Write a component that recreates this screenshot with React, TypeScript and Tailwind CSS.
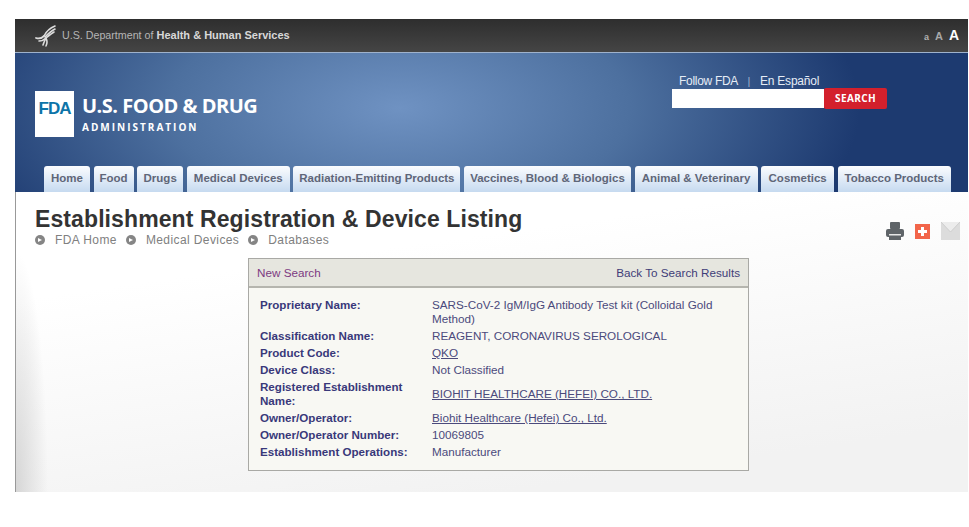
const tabs = [
  { label: "Home", width: "w-[46px]" },
  { label: "Food", width: "w-[40px]" },
  { label: "Drugs", width: "w-[46px]" },
  { label: "Medical Devices", width: "w-[103px]" },
  { label: "Radiation-Emitting Products", width: "w-[167px]" },
  { label: "Vaccines, Blood & Biologics", width: "w-[167px]" },
  { label: "Animal & Veterinary", width: "w-[123px]" },
  { label: "Cosmetics", width: "w-[73px]" },
  { label: "Tobacco Products", width: "w-[113px]" },
];

const crumbs = ["FDA Home", "Medical Devices", "Databases"];

const rows = [
  { label: "Proprietary Name:", value: "SARS-CoV-2 IgM/IgG Antibody Test kit (Colloidal Gold Method)" },
  { label: "Classification Name:", value: "REAGENT, CORONAVIRUS SEROLOGICAL" },
  { label: "Product Code:", value: "QKO", link: true },
  { label: "Device Class:", value: "Not Classified" },
  { label: "Registered Establishment Name:", value: "BIOHIT HEALTHCARE (HEFEI) CO., LTD.", link: true },
  { label: "Owner/Operator:", value: "Biohit Healthcare (Hefei) Co., Ltd.", link: true },
  { label: "Owner/Operator Number:", value: "10069805" },
  { label: "Establishment Operations:", value: "Manufacturer" },
];

function Eagle() {
  return (
    <svg width="22" height="22" viewBox="0 0 22 22" fill="none" stroke="#dcdcdc" strokeLinecap="round">
      <path d="M20 1 C15 3 11 7 9 11" strokeWidth="1.6" />
      <path d="M20 4 C16 6 13 9 10 12" strokeWidth="1.6" />
      <path d="M19 7 C16 9 13 11 11 13" strokeWidth="1.6" />
      <path d="M1 13 C4 14 7 13 9 11" strokeWidth="1.8" />
      <path d="M4 16 C7 16 9 15 11 13" strokeWidth="1.6" />
      <path d="M8 20 C9 17 10 15 11 13 C12 15 13 17 11 21" strokeWidth="1.6" />
    </svg>
  );
}

function Printer() {
  return (
    <svg width="18" height="18" viewBox="0 0 18 18" fill="#5f6468">
      <rect x="4" y="0" width="10" height="7" rx="1" />
      <rect x="0" y="7" width="18" height="8" rx="2" />
      <rect x="3" y="12" width="12" height="1.5" fill="#e6e6e6" />
      <rect x="3" y="15" width="12" height="3" />
    </svg>
  );
}

function AddThis() {
  return (
    <svg width="15" height="15" viewBox="0 0 15 15">
      <rect width="15" height="15" fill="#f2654a" />
      <path d="M6 3h3v3h3v3H9v3H6V9H3V6h3z" fill="#fff" />
    </svg>
  );
}

function Mail() {
  return (
    <svg width="19" height="18" viewBox="0 0 19 18">
      <rect width="19" height="18" fill="#dcdcdc" />
      <path d="M0 0l9.5 10L19 0" fill="#ececec" stroke="#c4c4c4" strokeWidth="0.7" />
    </svg>
  );
}

function Bullet() {
  return (
    <span className="flex h-[10px] w-[10px] items-center justify-center rounded-full bg-[#858585]">
      <span className="h-0 w-0 border-y-[2.5px] border-l-[4px] border-y-transparent border-l-white" />
    </span>
  );
}

export default function App() {
  return (
    <div className="min-h-[527px] bg-white pt-[19px] pl-[15px] pr-px font-['Liberation_Sans',Arial,sans-serif]">
      <div className="flex h-[33px] items-center justify-between bg-gradient-to-b from-[#2e2e2e] to-[#454545] pl-[20px] pr-[9px]">
        <div className="flex items-center gap-[5px]">
          <Eagle />
          <span className="text-[10.7px] text-[#b5b5b5]">
            U.S. Department of <b className="text-[11px] text-[#d8d8d8]">Health &amp; Human Services</b>
          </span>
        </div>
        <div className="flex items-baseline gap-[6px] font-bold">
          <span className="text-[9px] text-[#b0b0b0]">a</span>
          <span className="text-[11px] text-[#a8a8a8]">A</span>
          <span className="text-[14px] text-white">A</span>
        </div>
      </div>
      <div className="h-px bg-[#9fb2cc]" />

      <div className="relative flex h-[139px] flex-col bg-[radial-gradient(ellipse_460px_210px_at_385px_55px,#6f92c2_0%,#4d709f_50%,#1d3a70_100%)]">
        <div className="flex h-[113px] justify-between">
          <div className="flex pl-[20px] pt-[38px]">
            <div className="flex h-[46px] w-[39px] items-start justify-center bg-white pt-[5px] text-[17px] font-bold tracking-[-1px] text-[#0d74a8]">
              FDA
            </div>
            <div className="pl-[8px] pt-[2px] font-['Open_Sans',sans-serif] font-bold text-white">
              <div className="text-[20px] leading-[26px] tracking-[-0.5px]">U.S. FOOD &amp; DRUG</div>
              <div className="mt-[3px] text-[10px] leading-[11px] tracking-[2px]">ADMINISTRATION</div>
            </div>
          </div>
          <div className="mr-[81px] w-[215px] pt-[21px]">
            <div className="pl-[7px] text-[12px] leading-[14px] text-[#e6edf6]">
              <span className="tracking-[-0.3px]">Follow FDA</span>
              <span className="px-[9.5px] text-[11px] text-[#9db3d0]">|</span>
              <span className="tracking-[-0.2px]">En Español</span>
            </div>
            <div className="flex h-[21px] items-center">
              <div className="h-[19px] w-[152px] bg-white" />
              <div className="flex h-[21px] w-[63px] items-center justify-center rounded-[2px] bg-[#d3202c] font-['Open_Sans',sans-serif] text-[10px] font-bold tracking-[0.4px] text-white">
                SEARCH
              </div>
            </div>
          </div>
        </div>
        <div className="flex h-[26px] gap-[3.6px] pl-[29px]">
          {tabs.map((tab) => (
            <div
              key={tab.label}
              className={`${tab.width} flex items-center justify-center rounded-t-[3px] bg-gradient-to-b from-[#fbfcfe] to-[#c6daf0] text-[11.5px] font-bold text-[#5f6678]`}
            >
              {tab.label}
            </div>
          ))}
        </div>
      </div>

      <div className="h-[300px] border-l border-l-[#999] bg-[radial-gradient(ellipse_32px_240px_at_0_100%,#d6d6d6,transparent),linear-gradient(172deg,#ffffff_25%,#f2f2f2_85%)]">
        <div className="flex items-start justify-between pl-[19px] pr-[8px]">
          <div>
            <h1 className="pt-[13px] text-[23px] leading-[28px] font-bold tracking-[0.1px] text-[#333]">
              Establishment Registration &amp; Device Listing
            </h1>
            <div className="flex h-[14px] items-center text-[12px] tracking-[0.4px] text-[#808080]">
              {crumbs.map((crumb) => (
                <span key={crumb} className="mr-[9px] flex items-center gap-[10px]">
                  <Bullet />
                  {crumb}
                </span>
              ))}
            </div>
          </div>
          <div className="flex items-center gap-[11px] pt-[30px]">
            <Printer />
            <AddThis />
            <Mail />
          </div>
        </div>

        <div className="ml-[232px] mt-[11px] w-[501px] border border-[#a9a9a5] bg-[#f8f8f3] text-[11.7px] leading-[14px] text-[#4b4a7c]">
          <div className="flex h-[29px] items-center justify-between border-b-2 border-b-[#b5b5ae] bg-[#e6e6df] pl-[8px] pr-[8px]">
            <span className="text-[#7d3a82]">New Search</span>
            <span className="text-[#3f3d78]">Back To Search Results</span>
          </div>
          <div className="grid grid-cols-[172px_304px] gap-y-[3px] pb-[11px] pl-[11px] pt-[10px]">
            {rows.map((row) => (
              <div key={row.label} className="contents">
                <div className="pr-[10px] text-[11.6px] font-bold text-[#39387a]">{row.label}</div>
                <div className="flex items-center">
                  {row.link ? <span className="underline">{row.value}</span> : <span>{row.value}</span>}
                </div>
              </div>
            ))}
          </div>
        </div>
      </div>
    </div>
  );
}
